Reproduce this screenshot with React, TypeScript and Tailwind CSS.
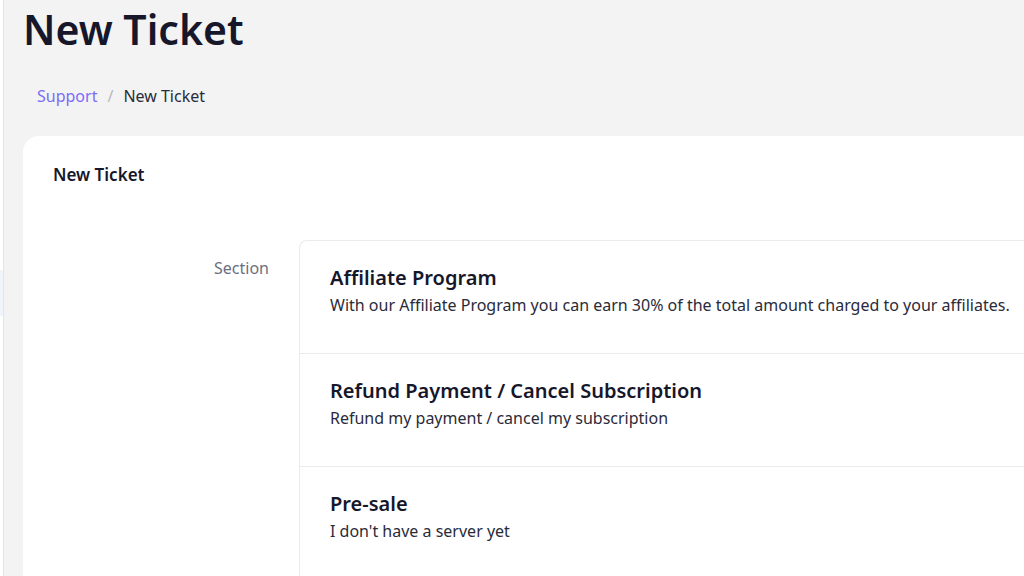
import React from 'react'

const options = [
  {
    title: 'Affiliate Program',
    description: 'With our Affiliate Program you can earn 30% of the total amount charged to your affiliates.',
  },
  {
    title: 'Refund Payment / Cancel Subscription',
    description: 'Refund my payment / cancel my subscription',
  },
  {
    title: 'Pre-sale',
    description: "I don't have a server yet",
  },
]

export default function App() {
  return (
    <div
      className="h-[576px] w-[1024px] overflow-hidden flex bg-[#f3f3f4] text-[#16172b]"
      style={{ fontFamily: '"Noto Sans", "Open Sans", sans-serif' }}
    >
      {/* sidebar edge */}
      <div className="w-[4px] shrink-0 bg-white border-r border-[#e4e4e7] flex flex-col">
        <div className="h-[270px]" />
        <div className="h-[46px] bg-[#f0f4fb]" />
      </div>

      <main className="flex-1 min-w-0 pl-[19px]">
        <h1 className="text-[41px] leading-[58px] font-semibold">New Ticket</h1>

        <nav className="flex items-center gap-[10px] pl-[14px] mt-[26px] text-[16px] leading-[24px]">
          <span className="text-[#7b6cf6]">Support</span>
          <span className="text-[#b8b8c0]">/</span>
          <span className="text-[#2a2b3a]">New Ticket</span>
        </nav>

        <section className="mt-[28px] bg-white rounded-tl-[16px] h-[460px] pl-[30px] pt-[27px]">
          <h2 className="text-[17px] leading-[24px] font-semibold">New Ticket</h2>

          <div className="flex mt-[53px]">
            <div className="w-[216px] shrink-0 text-right pt-[16px] text-[16px] leading-[24px] text-[#6b6f80]">Section</div>
            <div className="ml-[30px] flex-1 border-l border-t border-[#ebebef] rounded-tl-[8px]">
              {options.map((o, i) => (
                <div
                  key={o.title}
                  className={`h-[113px] pl-[30px] pt-[22px] ${i < options.length - 1 ? 'border-b border-[#ebebef]' : ''}`}
                >
                  <div className="text-[20px] leading-[30px] font-semibold whitespace-nowrap">{o.title}</div>
                  <div className="text-[16px] leading-[24px] text-[#2a2b3a] whitespace-nowrap">{o.description}</div>
                </div>
              ))}
            </div>
          </div>
        </section>
      </main>
    </div>
  )
}
